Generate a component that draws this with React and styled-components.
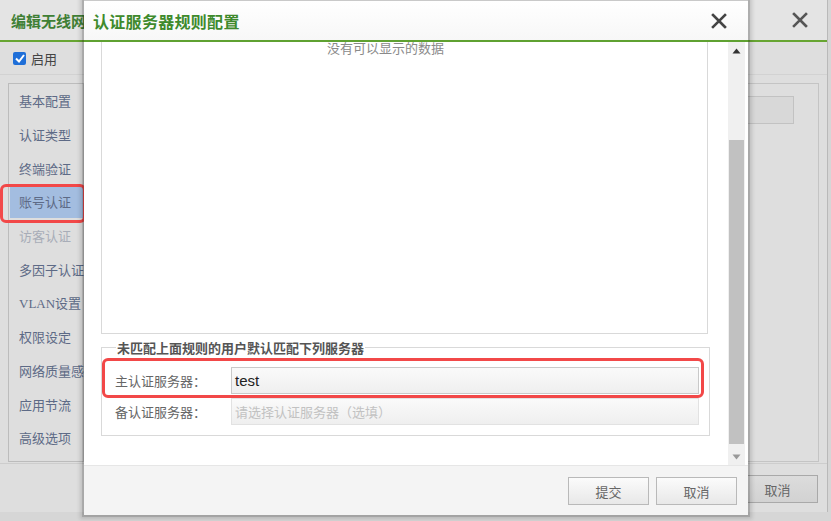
import styled, { createGlobalStyle } from "styled-components";

const GlobalStyle = createGlobalStyle`
  html, body { margin: 0; padding: 0; }
  body {
    width: 831px;
    height: 521px;
    overflow: hidden;
    background: #d6d6d6;
    font-family: "Liberation Serif", "Noto Sans CJK SC", serif;
  }
`;

const menu = [
  { label: "基本配置" },
  { label: "认证类型" },
  { label: "终端验证" },
  { label: "账号认证", active: true },
  { label: "访客认证", disabled: true },
  { label: "多因子认证" },
  { label: "VLAN设置" },
  { label: "权限设定" },
  { label: "网络质量感" },
  { label: "应用节流" },
  { label: "高级选项" },
];

const CloseIcon = ({ color = "#444" }) => (
  <svg width="16" height="16" viewBox="0 0 16 16">
    <path d="M2 2 L14 14 M14 2 L2 14" stroke={color} strokeWidth="2.6" strokeLinecap="square" />
  </svg>
);

const Arrow = ({ up }) => (
  <svg width="9" height="6" viewBox="0 0 9 6">
    <path d={up ? "M0.5 5.5 L4.5 0.5 L8.5 5.5 Z" : "M0.5 0.5 L4.5 5.5 L8.5 0.5 Z"} fill={up ? "#333" : "#999"} />
  </svg>
);

const App = () => (
  <Page>
    <GlobalStyle />
    <OuterDialog>
      <OuterHeader>
        <OuterTitle>编辑无线网络</OuterTitle>
        <CloseButton>
          <CloseIcon color="#555" />
        </CloseButton>
      </OuterHeader>
      <CheckRow>
        <CheckBox>
          <svg width="10" height="9" viewBox="0 0 10 9">
            <path d="M1 4.5 L4 7.5 L9 1" stroke="#fff" strokeWidth="2" fill="none" />
          </svg>
        </CheckBox>
        <CheckLabel>启用</CheckLabel>
      </CheckRow>
      <OuterMain>
        <SideMenu>
          {menu.map((item) => (
            <MenuItem key={item.label} $active={item.active} $disabled={item.disabled}>
              {item.label}
              {item.active && <Highlight $menu />}
            </MenuItem>
          ))}
        </SideMenu>
        <Panel>
          <PanelField />
        </Panel>
      </OuterMain>
      <OuterFooter>
        <Button $dim>取消</Button>
      </OuterFooter>
    </OuterDialog>

    <Modal>
      <ModalHeader>
        <ModalTitle>认证服务器规则配置</ModalTitle>
        <CloseButton>
          <CloseIcon />
        </CloseButton>
      </ModalHeader>
      <ModalBody>
        <ScrollContent>
          <GridBox>
            <EmptyText>没有可以显示的数据</EmptyText>
          </GridBox>
          <FieldSet>
            <Legend>未匹配上面规则的用户默认匹配下列服务器</Legend>
            <FormRow>
              <FieldLabel>主认证服务器：</FieldLabel>
              <Input>test</Input>
            </FormRow>
            <FormRow>
              <FieldLabel>备认证服务器：</FieldLabel>
              <Input $placeholder>请选择认证服务器（选填）</Input>
            </FormRow>
            <Highlight $form />
          </FieldSet>
        </ScrollContent>
        <ScrollBar>
          <ScrollArrow>
            <Arrow up />
          </ScrollArrow>
          <ScrollTrack>
            <ScrollThumb />
          </ScrollTrack>
          <ScrollArrow>
            <Arrow />
          </ScrollArrow>
        </ScrollBar>
      </ModalBody>
      <ModalFooter>
        <Button>提交</Button>
        <Button>取消</Button>
      </ModalFooter>
    </Modal>
  </Page>
);

const Page = styled.div`
  position: relative;
  width: 831px;
  height: 521px;
  overflow: hidden;
`;

const OuterDialog = styled.div`
  width: 828px;
  height: 512px;
  background: #dedede;
  border-right: 1px solid #b9b9b9;
  display: flex;
  flex-direction: column;
  box-sizing: border-box;
`;

const OuterHeader = styled.div`
  height: 40px;
  flex-shrink: 0;
  background: #e4e4e4;
  border-bottom: 2px solid #67a532;
  display: flex;
  align-items: center;
  justify-content: space-between;
  padding: 0 18px 0 11px;
`;

const OuterTitle = styled.div`
  font-size: 15px;
  font-weight: bold;
  color: #3f7f35;
`;

const CloseButton = styled.div`
  display: flex;
  align-items: center;
  justify-content: center;
  width: 18px;
  height: 18px;
`;

const CheckRow = styled.div`
  height: 33px;
  flex-shrink: 0;
  display: flex;
  align-items: center;
  padding-left: 13px;
  border-bottom: 1px solid #d2d2d2;
  box-sizing: border-box;
`;

const CheckBox = styled.div`
  width: 13px;
  height: 13px;
  border-radius: 2px;
  background: #1f6fd8;
  display: flex;
  align-items: center;
  justify-content: center;
`;

const CheckLabel = styled.span`
  margin-left: 5px;
  font-size: 13px;
  color: #444;
`;

const OuterMain = styled.div`
  display: flex;
  gap: 8px;
  padding: 8px 8px 0 8px;
  height: 388px;
  box-sizing: border-box;
`;

const SideMenu = styled.div`
  width: 76px;
  height: 379px;
  border: 1px solid #bcbcbc;
  box-sizing: border-box;
  padding-top: 1px;
  display: flex;
  flex-direction: column;
  gap: 2px;
`;

const MenuItem = styled.div`
  position: relative;
  height: 31.7px;
  flex-shrink: 0;
  display: flex;
  align-items: center;
  padding-left: 9px;
  margin-left: 1px;
  font-size: 13px;
  white-space: nowrap;
  color: ${(p) => (p.$disabled ? "#a8adb8" : "#5d6a86")};
  background: ${(p) => (p.$active ? "#a3bde0" : "transparent")};
`;

const Highlight = styled.div`
  position: absolute;
  border: 3px solid #f24848;
  border-radius: 6px;
  pointer-events: none;
  ${(p) =>
    p.$menu &&
    `
    left: -10px; right: -3px; top: -2px; bottom: -5px;
  `}
  ${(p) =>
    p.$form &&
    `
    left: 0px; width: 602px; top: 1px; height: 40px;
    box-sizing: border-box;
  `}
`;

const Panel = styled.div`
  flex: 1;
  height: 379px;
  border: 1px solid #c4c4c4;
  box-sizing: border-box;
  padding: 12px 24px 0 0;
  display: flex;
  justify-content: flex-end;
`;

const PanelField = styled.div`
  width: 300px;
  height: 26px;
  border: 1px solid #c2c2c2;
  background: #d8d8d8;
`;

const OuterFooter = styled.div`
  flex: 1;
  border-top: 1px solid #cdcdcd;
  display: flex;
  justify-content: flex-end;
  align-items: flex-start;
  padding: 11px 9px 0 0;
`;

const Button = styled.div`
  width: 81px;
  height: 28px;
  box-sizing: border-box;
  border: 1px solid ${(p) => (p.$dim ? "#a9a9a9" : "#b9b9b9")};
  background: ${(p) =>
    p.$dim ? "linear-gradient(#dcdcdc, #d2d2d2)" : "linear-gradient(#fbfbfb, #e8e8e8)"};
  display: flex;
  align-items: center;
  justify-content: center;
  font-size: 13px;
  color: #666;
`;

const Modal = styled.div`
  position: absolute;
  left: 84px;
  top: 0;
  width: 664px;
  height: 515px;
  background: #fff;
  display: flex;
  flex-direction: column;
  border-top: 1px solid #c9c9c9;
  box-sizing: border-box;
  box-shadow: 0 0 0 2px rgba(0, 0, 0, 0.12), 0 0 4px 4px rgba(0, 0, 0, 0.14);
`;

const ModalHeader = styled.div`
  height: 39px;
  flex-shrink: 0;
  background: linear-gradient(#ffffff, #f7f7f7);
  border-bottom: 2px solid #5fa131;
  display: flex;
  align-items: center;
  justify-content: space-between;
  padding: 0 20px 0 9px;
`;

const ModalTitle = styled.div`
  font-size: 16px;
  font-weight: bold;
  color: #3e8a2c;
  letter-spacing: 0.3px;
`;

const ModalBody = styled.div`
  height: 423px;
  flex-shrink: 0;
  display: flex;
`;

const ScrollContent = styled.div`
  flex: 1;
  padding: 0 20px 0 17px;
  overflow: hidden;
`;

const GridBox = styled.div`
  height: 292px;
  border: 1px solid #d9d9d9;
  border-top: none;
  box-sizing: border-box;
  display: flex;
  justify-content: center;
`;

const EmptyText = styled.div`
  font-size: 13px;
  line-height: 13px;
  color: #8a8a8a;
  margin-right: 38px;
`;

const FieldSet = styled.fieldset`
  position: relative;
  margin: 4px -2px 0 0;
  padding: 10px 10px 10px 13px;
  border: 1px solid #d9d9d9;
  display: flex;
  flex-direction: column;
  gap: 4px;
`;

const Legend = styled.legend`
  font-size: 13px;
  font-weight: bold;
  color: #555;
  padding: 0 1px;
  margin-left: 1px;
`;

const FormRow = styled.div`
  display: flex;
  align-items: center;
`;

const FieldLabel = styled.div`
  width: 116px;
  flex-shrink: 0;
  font-size: 13px;
  color: #666;
`;

const Input = styled.div`
  flex: 1;
  height: 27px;
  box-sizing: border-box;
  border: 1px solid ${(p) => (p.$placeholder ? "#e2e2e2" : "#c9c9c9")};
  background: linear-gradient(#fafafa, #efefef);
  display: flex;
  align-items: center;
  padding-left: 3px;
  font-family: ${(p) =>
    p.$placeholder ? `"Noto Sans CJK SC", sans-serif` : `"Liberation Sans", Arial, sans-serif`};
  font-size: ${(p) => (p.$placeholder ? "13px" : "15px")};
  color: ${(p) => (p.$placeholder ? "#c2c2c2" : "#222")};
`;

const ScrollBar = styled.div`
  width: 17px;
  margin-right: 3px;
  background: #f0f0f0;
  display: flex;
  flex-direction: column;
`;

const ScrollArrow = styled.div`
  height: 17px;
  display: flex;
  align-items: center;
  justify-content: center;
`;

const ScrollTrack = styled.div`
  flex: 1;
  padding-top: 81px;
  display: flex;
  flex-direction: column;
`;

const ScrollThumb = styled.div`
  flex: 1;
  margin: 0 1px 4px 1px;
  background: #c1c1c1;
`;

const ModalFooter = styled.div`
  flex: 1;
  background: #f4f4f4;
  border-top: 1px solid #e6e6e6;
  display: flex;
  justify-content: flex-end;
  align-items: flex-start;
  gap: 7px;
  padding: 11px 11px 0 0;
`;

export default App;
